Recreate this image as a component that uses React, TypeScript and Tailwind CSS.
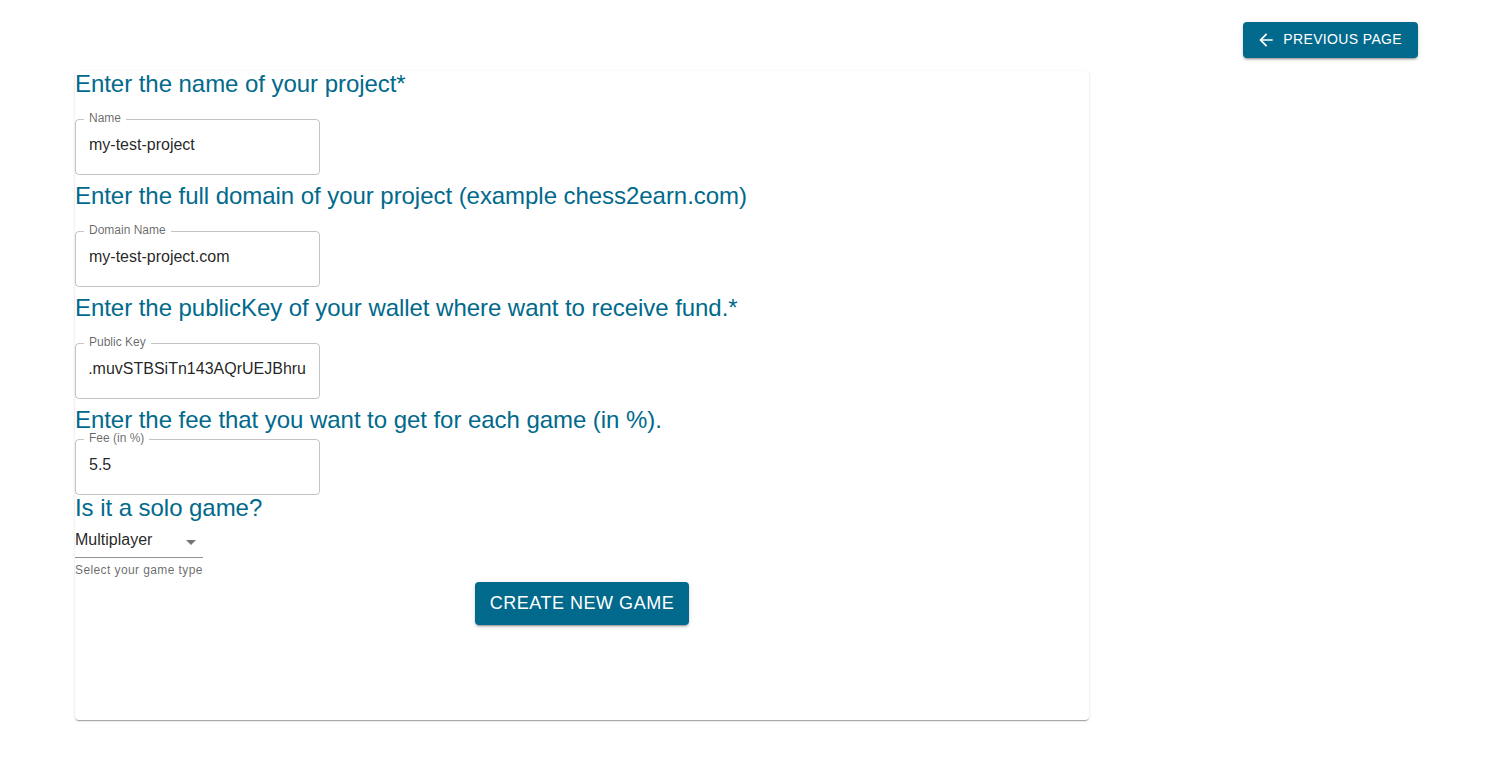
import React from "react";

const PRIMARY = "#016a8c";

function OutlinedField({ label, value, className = "", scrolled = false }: { label: string; value: string; className?: string; scrolled?: boolean }) {
  return (
    <div className={`relative w-[245px] ${className}`}>
      <div className="h-[56px] rounded-[4px] border border-[rgba(0,0,0,0.23)] flex items-start pt-[13px] px-[13px] overflow-hidden">
        {scrolled ? (
          <div className="w-full overflow-hidden flex justify-end">
            <span className="whitespace-nowrap text-[16px] leading-[23px] text-[rgba(0,0,0,0.87)]">{value}</span>
          </div>
        ) : (
          <span className="whitespace-nowrap text-[16px] leading-[23px] text-[rgba(0,0,0,0.87)]">{value}</span>
        )}
      </div>
      <span className="absolute -top-[8px] left-[9px] px-[5px] bg-white text-[12px] leading-[15px] text-[rgba(0,0,0,0.6)]">
        {label}
      </span>
    </div>
  );
}

function Heading({ children }: { children: React.ReactNode }) {
  return (
    <h5 className="h-[32px] text-[24px] leading-[26px] font-normal tracking-[-0.05px]" style={{ color: PRIMARY }}>
      {children}
    </h5>
  );
}

export default function App() {
  return (
    <div className="min-h-[774px] bg-white font-['Liberation_Sans','Helvetica','Arial',sans-serif]">
      <div className="flex justify-end pt-[22px] pr-[74px]">
        <button
          className="h-[36px] flex items-center pl-[13px] pr-[16px] pb-[2px] rounded-[4px] text-white text-[14px] font-normal tracking-[0.025em] uppercase shadow-[0px_3px_1px_-2px_rgba(0,0,0,0.2),0px_2px_2px_0px_rgba(0,0,0,0.14),0px_1px_5px_0px_rgba(0,0,0,0.12)]"
          style={{ backgroundColor: PRIMARY }}
        >
          <svg viewBox="0 0 24 24" width="20" height="20" fill="currentColor" className="mr-[7px] mt-[2px]">
            <path d="M20 11H7.83l5.59-5.59L12 4l-8 8 8 8 1.41-1.41L7.83 13H20v-2z" />
          </svg>
          Previous page
        </button>
      </div>
      <div className="ml-[75px] mt-[13px] w-[1014px] h-[649px] bg-white rounded-[4px] shadow-[0px_2px_1px_-1px_rgba(0,0,0,0.2),0px_1px_1px_0px_rgba(0,0,0,0.14),0px_1px_3px_0px_rgba(0,0,0,0.12)] flex flex-col">
        <Heading>Enter the name of your project*</Heading>
        <OutlinedField label="Name" value="my-test-project" className="mt-[16px] mb-[8px]" />
        <Heading>Enter the full domain of your project (example chess2earn.com)</Heading>
        <OutlinedField label="Domain Name" value="my-test-project.com" className="mt-[16px] mb-[8px]" />
        <Heading>Enter the publicKey of your wallet where want to receive fund.*</Heading>
        <OutlinedField
          label="Public Key"
          value="7xKXtg2CW87d97TXJSDpbD5jBkheTqA83TZRuJosgAsU.muvSTBSiTn143AQrUEJBhru"
          scrolled
          className="mt-[16px] mb-[8px]"
        />
        <Heading>Enter the fee that you want to get for each game (in %).</Heading>
        <OutlinedField label="Fee (in %)" value="5.5" />
        <Heading>Is it a solo game?</Heading>
        <div className="w-[128px] flex flex-col">
          <div className="relative h-[31px] border-b border-[rgba(0,0,0,0.42)] flex items-start pt-[1px]">
            <span className="text-[16px] leading-[23px] text-[rgba(0,0,0,0.87)]">Multiplayer</span>
            <svg viewBox="0 0 24 24" width="24" height="24" fill="rgba(0,0,0,0.54)" className="absolute right-0 top-[3px]">
              <path d="M7 10l5 5 5-5z" />
            </svg>
          </div>
          <p className="mt-[2px] text-[12px] leading-[20px] tracking-[0.03333em] text-[rgba(0,0,0,0.6)]">
            Select your game type
          </p>
        </div>
        <div className="flex justify-center mt-[2px]">
          <button
            className="h-[43px] px-[15px] rounded-[4px] text-white text-[18px] font-normal tracking-[0.02857em] uppercase shadow-[0px_3px_1px_-2px_rgba(0,0,0,0.2),0px_2px_2px_0px_rgba(0,0,0,0.14),0px_1px_5px_0px_rgba(0,0,0,0.12)]"
            style={{ backgroundColor: PRIMARY }}
          >
            Create new game
          </button>
        </div>
      </div>
    </div>
  );
}
